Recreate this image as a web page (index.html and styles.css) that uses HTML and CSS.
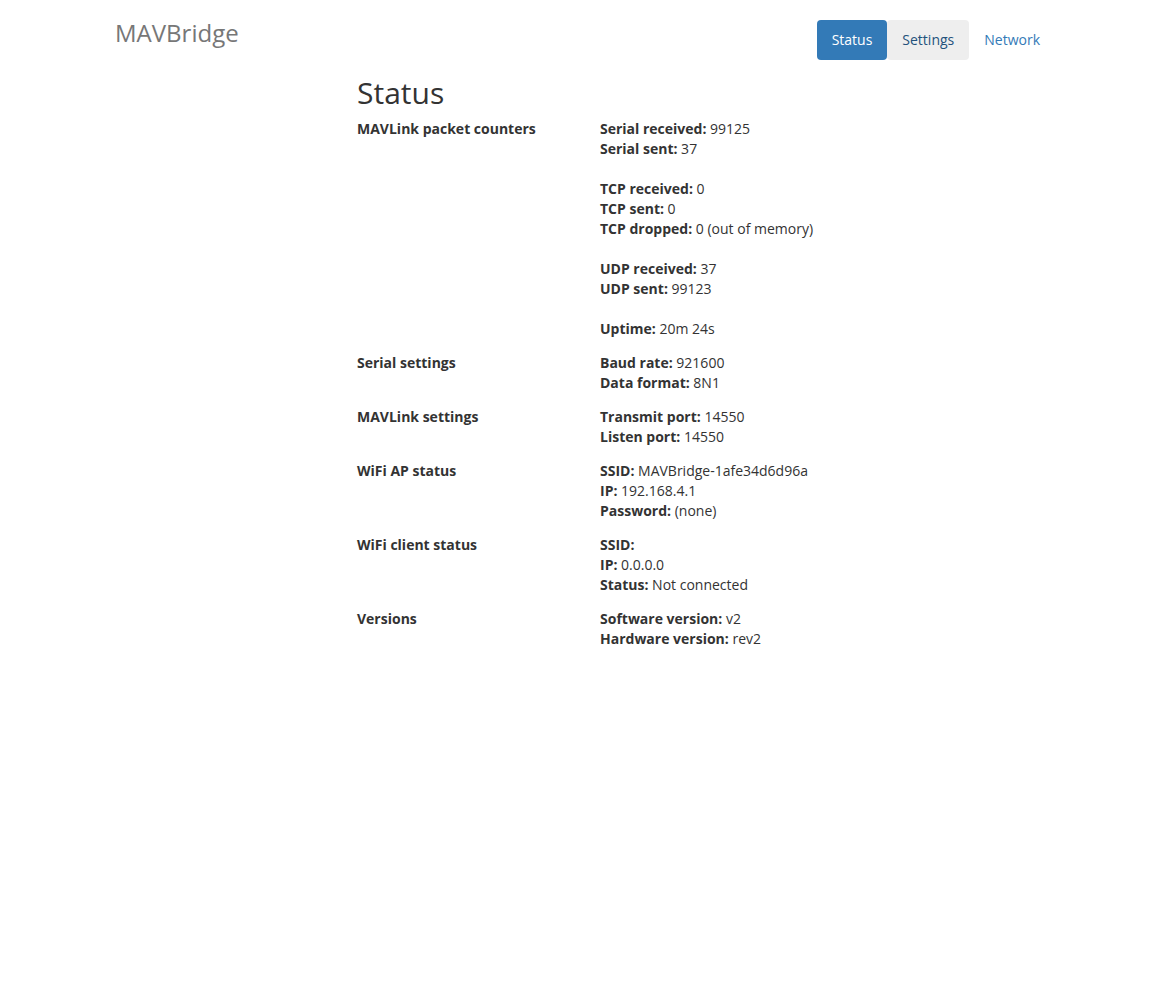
FILE: index.html
```html
<!DOCTYPE html>
<html>
<head>
<meta charset="utf-8">
<title>MAVBridge</title>
<link rel="stylesheet" href="styles.css">
</head>
<body>
<div class="container">
  <header class="header">
    <h3 class="brand">MAVBridge</h3>
    <nav class="pills">
      <a class="pill active" href="#">Status</a>
      <a class="pill hover" href="#">Settings</a>
      <a class="pill" href="#">Network</a>
    </nav>
  </header>
  <main class="main">
    <h2 class="title">Status</h2>
    <div class="rows">
      <div class="row">
        <div class="label">MAVLink packet counters</div>
        <div class="value">
          <div><b>Serial received:</b> 99125</div>
          <div><b>Serial sent:</b> 37</div>
          <div class="blank"></div>
          <div><b>TCP received:</b> 0</div>
          <div><b>TCP sent:</b> 0</div>
          <div><b>TCP dropped:</b> 0 (out of memory)</div>
          <div class="blank"></div>
          <div><b>UDP received:</b> 37</div>
          <div><b>UDP sent:</b> 99123</div>
          <div class="blank"></div>
          <div><b>Uptime:</b> 20m 24s</div>
        </div>
      </div>
      <div class="row">
        <div class="label">Serial settings</div>
        <div class="value">
          <div><b>Baud rate:</b> 921600</div>
          <div><b>Data format:</b> 8N1</div>
        </div>
      </div>
      <div class="row">
        <div class="label">MAVLink settings</div>
        <div class="value">
          <div><b>Transmit port:</b> 14550</div>
          <div><b>Listen port:</b> 14550</div>
        </div>
      </div>
      <div class="row">
        <div class="label">WiFi AP status</div>
        <div class="value">
          <div><b>SSID:</b> MAVBridge-1afe34d6d96a</div>
          <div><b>IP:</b> 192.168.4.1</div>
          <div><b>Password:</b> (none)</div>
        </div>
      </div>
      <div class="row">
        <div class="label">WiFi client status</div>
        <div class="value">
          <div><b>SSID:</b> </div>
          <div><b>IP:</b> 0.0.0.0</div>
          <div><b>Status:</b> Not connected</div>
        </div>
      </div>
      <div class="row">
        <div class="label">Versions</div>
        <div class="value">
          <div><b>Software version:</b> v2</div>
          <div><b>Hardware version:</b> rev2</div>
        </div>
      </div>
    </div>
  </main>
</div>
</body>
</html>
```
FILE: styles.css
```css
html, body {
  margin: 0;
  padding: 0;
  background: #fff;
}
body {
  font-family: "Open Sans", "Helvetica Neue", Arial, sans-serif;
  font-size: 14px;
  line-height: 20px;
  color: #333;
}
.container {
  box-sizing: border-box;
  width: 955px;
  margin: 0 auto;
  padding-left: 15px;
}
.header {
  display: flex;
  justify-content: space-between;
  align-items: flex-start;
  padding-top: 20px;
}
.brand {
  margin: 0;
  font-size: 24px;
  line-height: 26px;
  font-weight: 400;
  color: #777;
}
.pills {
  display: flex;
}
.pill {
  display: block;
  padding: 10px 15px;
  border-radius: 4px;
  color: #337ab7;
  text-decoration: none;
  line-height: 20px;
}
.pill.active {
  background: #337ab7;
  color: #fff;
}
.pill.hover {
  background: #eee;
  color: #23527c;
}
.main {
  margin-left: 242px;
  margin-top: 16px;
}
.title {
  margin: 0 0 10px 0;
  font-size: 30px;
  line-height: 33px;
  font-weight: 400;
  color: #333;
}
.rows {
  display: flex;
  flex-direction: column;
  gap: 14px;
}
.row {
  display: grid;
  grid-template-columns: 243px 1fr;
}
.label {
  font-weight: 700;
}
.value b {
  font-weight: 700;
}
.blank {
  height: 20px;
}
```
